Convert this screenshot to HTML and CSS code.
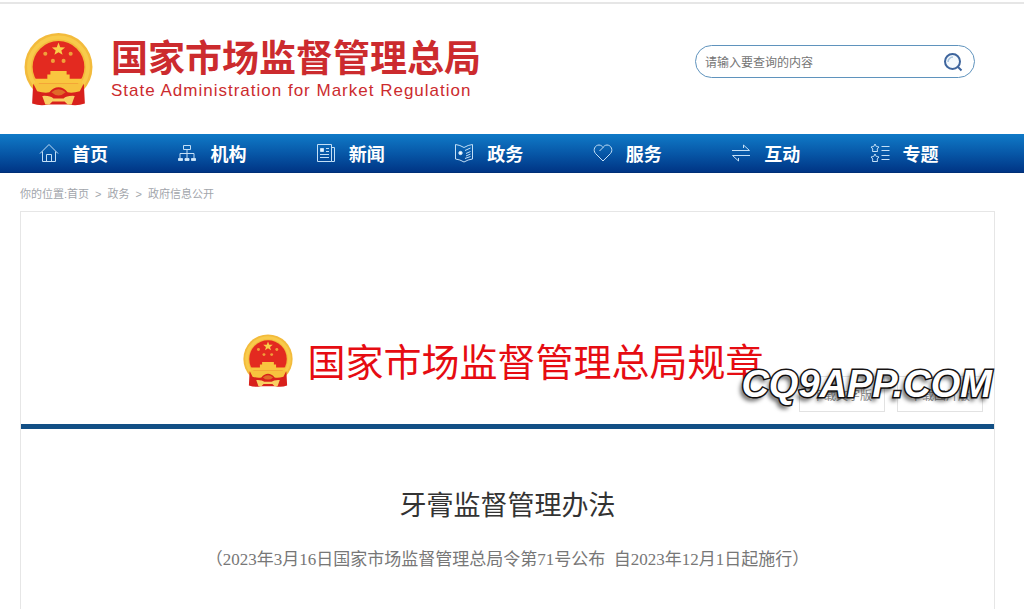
FILE: index.html
```html
<!DOCTYPE html>
<html lang="zh-CN">
<head>
<meta charset="utf-8">
<meta name="viewport" content="width=device-width, initial-scale=1">
<title>牙膏监督管理办法</title>
<link rel="stylesheet" href="styles.css">
</head>
<body>
<svg class="defs" width="0" height="0" aria-hidden="true">
  <symbol id="emblem" viewBox="0 0 68 72">
    <circle cx="34" cy="34" r="33.500" fill="#f3bb3c"/>
    <circle cx="34" cy="34" r="29" fill="none" stroke="#f8cb4b" stroke-width="4"/>
    <circle cx="34" cy="34" r="25.500" fill="#e32a20"/>
    <path d="M34 10 L35.700 14.500 L40.500 14.700 L36.800 17.700 L38 22 L34 19.500 L30 22 L31.200 17.700 L27.500 14.700 L32.300 14.500Z" fill="#f9d04a"/>
    <g fill="#f0a03a"><circle cx="21" cy="21" r="2"/><circle cx="46" cy="21" r="2"/><circle cx="28.500" cy="28" r="2"/><circle cx="39" cy="28" r="2"/></g>
    <path d="M26 38H42V41.500H45V45.500H57V50H11V45.500H23V41.500H26Z" fill="#f9c63f"/>
    <path d="M9 51 H59 L60 70 Q52 73 44 71 L24 71 Q16 73 8 70Z" fill="#d8201c"/>
    <path d="M9 50 H59 L55 58 Q48 60 43 59 Q39 54 34 54 Q29 54 25 59 Q20 60 13 58Z" fill="#f7c23e"/>
    <path d="M27 59 Q34 53 41 59 Q38 62 34 62 Q30 62 27 59Z" fill="#e06a28"/>
    <path d="M18 62.500 Q26 62 29 65 H39 Q42 62 50 62.500 L47 71 H43 L40 68 H28 L25 71 H21Z" fill="#f9cf63"/>
  </symbol>
</svg>

<header class="site-header">
  <a class="brand" href="#">
    <svg class="brand-emblem" aria-hidden="true"><use href="#emblem"/></svg>
    <span class="brand-text">
      <span class="brand-name">国家市场监督管理总局</span>
      <span class="brand-en" lang="en">State Administration for Market Regulation</span>
    </span>
  </a>
  <form class="search" role="search">
    <input class="search-input" type="search" aria-label="查询内容" placeholder="请输入要查询的内容">
    <button class="search-button" type="submit" aria-label="查询">
      <svg width="20" height="20" viewBox="0 0 20 20" fill="none" stroke="#3e659d" stroke-width="2"><circle cx="9.500" cy="9.500" r="7.500" fill="#f4f9fd"/><path d="M15 15 L18.500 18.500"/><path d="M5 10 A5 5 0 0 1 10 5" stroke="#a9c5df" stroke-width="1.500"/></svg>
    </button>
  </form>
</header>

<nav class="main-nav" aria-label="主导航">
  <a class="nav-item" href="#"><svg class="nav-icon" viewBox="0 0 20 20"><path d="M1 10.500 L10 1.500 L19 10.500 M3.500 8.500 V18.500 H16.500 V8.500 M7.500 18.500 V11.500 H12.500 V18.500"/></svg>首页</a>
  <a class="nav-item" href="#"><svg class="nav-icon" viewBox="0 0 20 20"><path d="M6.500 2.500 H13.500 V6.500 H6.500Z M10 6.500 V15 M3 15 V10.500 H17 V15"/><path d="M1.500 15.500 H5.500 V17.500 H1.500Z M8 15.500 H12 V17.500 H8Z M14.500 15.500 H18.500 V17.500 H14.500Z" fill="#d3e7f8"/></svg>机构</a>
  <a class="nav-item" href="#"><svg class="nav-icon" viewBox="0 0 20 20"><path d="M1.500 1.500 H15.500 V18.500 H1.500Z M15.500 4.500 H18.500 V18.500 H15.500 M10 5.500 H13 M10 8.500 H13 M4 11.500 H13 M4 14.500 H13"/><path d="M4.500 5.500 H7.500 V8.500 H4.500Z" fill="#e4f1fb"/></svg>新闻</a>
  <a class="nav-item" href="#"><svg class="nav-icon" viewBox="0 0 20 20"><path d="M1.500 1.500 Q6 2 10 4.500 Q14 2 18.500 1.500 V16 Q14 16.500 10 19 Q6 16.500 1.500 16Z M11 7.500 L16.500 5 M12 10.500 L16.500 8.500 M12 13 L16.500 11 M11 15.500 L16.500 13.500"/><circle cx="6.500" cy="10" r="1.700" fill="#fff"/></svg>政务</a>
  <a class="nav-item" href="#"><svg class="nav-icon" viewBox="0 0 20 20"><path d="M10 18 L2.500 10.500 C-.5 7 2 2 6 2 C8 2 9.500 3.500 10 4.500 C10.500 3.500 12 2 14 2 C18 2 20.500 7 17.500 10.500Z M10 4.500 L6.500 8"/></svg>服务</a>
  <a class="nav-item" href="#"><svg class="nav-icon" viewBox="0 0 20 20"><path d="M1 7.500 H18.500 L12.500 2 V5 M19 12.500 H1.500 L7.500 18 V15"/></svg>互动</a>
  <a class="nav-item" href="#"><svg class="nav-icon" viewBox="0 0 20 20"><path d="M5 1 L6.300 3.500 L9 4 L7.200 6 L7.500 8.500 H2.500 L2.800 6 L1 4 L3.700 3.500Z M5 11 L6.300 13.500 L9 14 L7.200 16 L7.500 18.500 H2.500 L2.800 16 L1 14 L3.700 13.500Z M11.500 3.500 H19.500 M11.500 7.500 H19.500 M11.500 12.500 H19.500 M11.500 16.500 H19.500"/></svg>专题</a>
</nav>

<div class="breadcrumb">
  <span>你的位置:<a href="#">首页</a></span><span>&gt;</span><a href="#">政务</a><span>&gt;</span><a href="#">政府信息公开</a>
</div>

<main class="document">
  <div class="masthead">
    <div class="masthead-title">
      <svg class="masthead-emblem" aria-hidden="true"><use href="#emblem"/></svg>
      <h2 class="masthead-name">国家市场监督管理总局规章</h2>
    </div>
    <div class="downloads">
      <button class="download" type="button">下载文字版</button>
      <button class="download" type="button">下载图片版</button>
    </div>
    <span class="watermark">CQ9APP.COM</span>
  </div>
  <article class="article">
    <h1 class="article-title">牙膏监督管理办法</h1>
    <p class="article-note">（2023年3月16日国家市场监督管理总局令第71号公布&ensp;自2023年12月1日起施行）</p>
  </article>
</main>
</body>
</html>
```
FILE: styles.css
```css
* { box-sizing: border-box; }

body {
  margin: 0;
  min-height: 100vh;
  display: flex;
  flex-direction: column;
  background: #fff;
  font-family: "Liberation Sans", "Noto Sans CJK SC", sans-serif;
  color: #333;
}

a { color: inherit; text-decoration: none; }
h1, h2, p { margin: 0; font-weight: 400; }
.defs { position: absolute; }

.site-header {
  display: flex;
  align-items: flex-start;
  justify-content: space-between;
  margin-top: 2px;
  padding: 28px 49px 28px 24px;
  border-top: 2px solid #e6e6e6;
}

.brand { display: flex; gap: 18px; color: #cc2b2e; }
.brand-emblem { width: 69px; height: 74px; }
.brand-text { display: flex; flex-direction: column; padding-top: 7px; }
.brand-name { font-size: 37px; line-height: 42px; font-weight: 700; }
.brand-en { font-size: 17px; line-height: 20px; letter-spacing: 1px; }

.search {
  display: flex;
  align-items: center;
  width: 280px;
  height: 33px;
  margin-top: 13px;
  padding: 0 11px 0 9px;
  border: 1px solid #5f93bd;
  border-radius: 17px;
}
.search-input {
  flex: 1;
  min-width: 0;
  padding: 0;
  border: 0;
  outline: 0;
  background: none;
  font: 12px "Noto Sans CJK SC", sans-serif;
}
.search-input::placeholder { color: #757575; }
.search-button { display: flex; padding: 0; border: 0; background: none; }

.main-nav {
  display: grid;
  grid-template-columns: repeat(7, 1fr);
  height: 39px;
  padding: 0 16px 0 39px;
  background: linear-gradient(#107ac7, #0758a8 50%, #003585);
  border-bottom: 1px solid #002f76;
}
.nav-item {
  display: flex;
  align-items: center;
  gap: 13px;
  color: #fff;
  font-size: 18px;
  font-weight: 700;
}
.nav-icon { width: 20px; height: 20px; fill: none; stroke: #c3dff6; stroke-width: 1; }

.breadcrumb {
  display: flex;
  gap: 6px;
  padding: 12px 20px 8px;
  color: #a2a5ab;
  font-size: 11px;
  line-height: 18px;
}

.document {
  flex: 1;
  margin: 0 29px 0 20px;
  border: 1px solid #e6e6e6;
  border-bottom: 0;
}

.masthead {
  position: relative;
  padding: 122px 11px 12px;
  border-bottom: 5px solid #124f85;
}
.masthead-title {
  display: flex;
  justify-content: center;
  gap: 14px;
  padding-right: 8px;
}
.masthead-emblem { width: 50px; height: 53px; }
.masthead-name { color: #e60c12; font-size: 38px; line-height: 58px; }
.downloads {
  display: flex;
  justify-content: flex-end;
  gap: 12px;
  margin-top: -16px;
}
.download {
  width: 86px;
  height: 36px;
  border: 1px solid #e2e2e2;
  background: none;
  color: #888;
  font: 12px "Noto Sans CJK SC", sans-serif;
}
.watermark {
  position: absolute;
  right: 2px;
  bottom: 12px;
  color: #fff;
  font: italic 700 38px/56px "Liberation Sans", sans-serif;
  -webkit-text-stroke: 3px #181414;
  paint-order: stroke fill;
  text-shadow: -3px 4px 4px rgba(0, 0, 0, 0.6);
}

.article { padding: 56px 0 24px; text-align: center; }
.article-title { font-size: 27px; line-height: 42px; }
.article-note {
  margin-top: 20px;
  color: #777;
  font: 17px/26px "Liberation Serif", "Noto Sans CJK SC", serif;
}
```
